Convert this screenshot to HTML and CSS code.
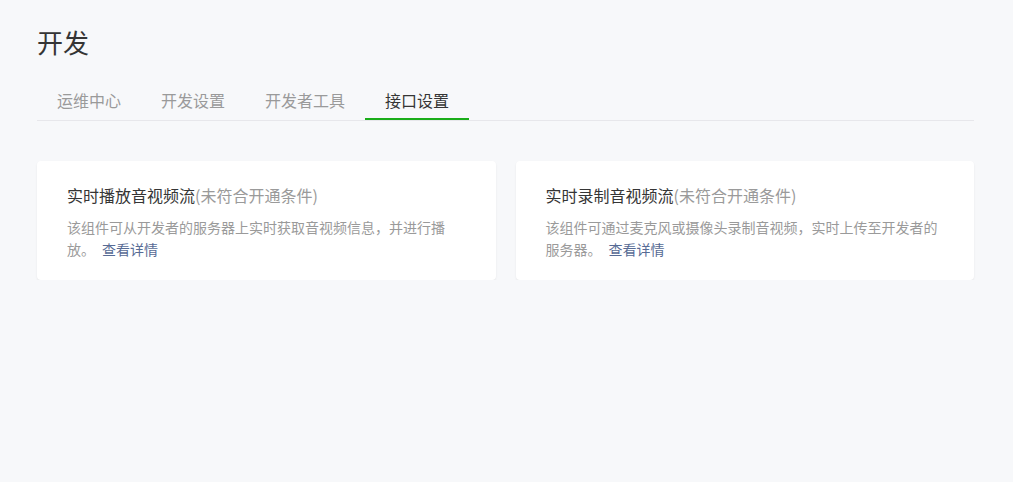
FILE: index.html
```html
<!DOCTYPE html>
<html lang="zh-CN">
<head>
  <meta charset="UTF-8">
  <title>开发</title>
  <link rel="stylesheet" href="styles.css">
</head>
<body>

<div class="page">
  <h1 class="page-title">开发</h1>

  <div class="tabs">
    <a class="tab">运维中心</a>
    <a class="tab">开发设置</a>
    <a class="tab">开发者工具</a>
    <a class="tab active">接口设置</a>
  </div>

  <div class="cards">
    <div class="card">
      <h3 class="card-title">实时播放音视频流<span class="status">(未符合开通条件)</span></h3>
      <p class="card-desc">该组件可从开发者的服务器上实时获取音视频信息，并进行播放。<a class="more">查看详情</a></p>
    </div>
    <div class="card">
      <h3 class="card-title">实时录制音视频流<span class="status">(未符合开通条件)</span></h3>
      <p class="card-desc">该组件可通过麦克风或摄像头录制音视频，实时上传至开发者的服务器。<a class="more">查看详情</a></p>
    </div>
  </div>
</div>

</body>
</html>
```

FILE: styles.css
```css
body {
  margin: 0;
  padding: 0;
  background: #f7f8fa;
  font-family: 'Noto Sans CJK SC', 'Noto Sans', sans-serif;
  color: #353535;
}
.page {
  padding: 24px 39px 0 37px;
}
.page-title {
  margin: 0;
  font-size: 26px;
  font-weight: normal;
  line-height: 36px;
  color: #353535;
}
.tabs {
  display: flex;
  gap: 0;
  margin-top: 22px;
  border-bottom: 1px solid #e7e7eb;
}
.tab {
  padding: 0 20px;
  font-size: 16px;
  line-height: 36px;
  color: #9a9a9a;
  border-bottom: 2px solid transparent;
  cursor: pointer;
}
.tab.active {
  color: #353535;
  border-bottom-color: #1aad19;
}
.cards {
  display: grid;
  grid-template-columns: 1fr 1fr;
  gap: 20px;
  margin-top: 40px;
}
.card {
  background: #fff;
  border-radius: 4px;
  box-shadow: 0 1px 2px rgba(0, 0, 0, 0.08);
  padding: 23px 30px 20px;
}
.card-title {
  margin: 0;
  font-size: 16px;
  font-weight: normal;
  line-height: 22px;
  color: #353535;
}
.status {
  color: #9a9a9a;
}
.card-desc {
  margin: 10px 0 0;
  font-size: 14px;
  line-height: 22px;
  color: #9a9a9a;
}
.more {
  margin-left: 7px;
  color: #576b95;
  cursor: pointer;
}
```
